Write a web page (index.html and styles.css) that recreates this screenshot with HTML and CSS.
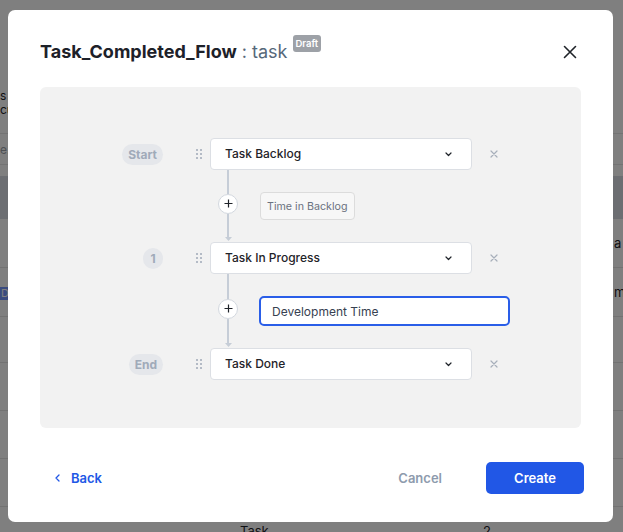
FILE: index.html
```html
<!DOCTYPE html>
<html>
<head>
<meta charset="utf-8">
<link rel="stylesheet" href="styles.css">
</head>
<body>
<div class="page">
  <div class="intro">
    <div class="frag">s</div>
    <div class="frag">cu</div>
  </div>
  <div class="search"><div class="frag muted">e.</div></div>
  <div class="table">
    <div class="thead"></div>
    <div class="trow tall"><span></span><span></span><span></span><span></span><span class="cell">a</span></div>
    <div class="trow tall"><span class="frag"><span class="badge">De</span></span><span></span><span></span><span></span><span class="cell">me</span></div>
    <div class="trow mid"></div>
    <div class="trow"></div>
    <div class="trow"></div>
    <div class="trow"></div>
    <div class="trow"><span></span><span></span><span class="cell">Task</span><span class="cell">2</span><span></span></div>
  </div>
</div>

<div class="overlay">
  <div class="modal">
    <div class="modal-head">
      <div class="title">
        <span class="name">Task_Completed_Flow</span>
        <span class="type">: task</span>
        <span class="draft">Draft</span>
      </div>
      <svg class="close" width="14" height="14" viewBox="0 0 14 14"><path d="M1.5 1.5 L12.5 12.5 M12.5 1.5 L1.5 12.5" stroke="#1f2329" stroke-width="1.6" stroke-linecap="round" fill="none"/></svg>
    </div>

    <div class="panel">
      <div class="step">
        <div class="label-col"><span class="pill">Start</span></div>
        <svg class="handle" width="6" height="10" viewBox="0 0 6 10"><g fill="#9fa9b7"><circle cx="1" cy="1" r="1"/><circle cx="5" cy="1" r="1"/><circle cx="1" cy="5" r="1"/><circle cx="5" cy="5" r="1"/><circle cx="1" cy="9" r="1"/><circle cx="5" cy="9" r="1"/></g></svg>
        <div class="select"><span>Task Backlog</span><svg class="chev" width="7" height="5" viewBox="0 0 7 5"><path d="M1 1 L3.5 3.5 L6 1" stroke="#1f2329" stroke-width="1.2" fill="none" stroke-linecap="round" stroke-linejoin="round"/></svg></div>
        <svg class="remove" width="8" height="8" viewBox="0 0 8 8"><path d="M1 1 L7 7 M7 1 L1 7" stroke="#a7afba" stroke-width="1.2" stroke-linecap="round"/></svg>
      </div>

      <div class="conn">
        <div class="rail">
          <div class="seg"></div>
          <div class="plus"><svg width="9" height="9" viewBox="0 0 9 9"><path d="M4.5 0.5 V8.5 M0.5 4.5 H8.5" stroke="#1f2329" stroke-width="1.2"/></svg></div>
          <div class="seg"></div>
          <svg class="arrow" width="7" height="4" viewBox="0 0 7 4"><path d="M0 0 H7 L3.5 4 Z" fill="#c6cdd7"/></svg>
        </div>
        <div class="conn-body"><span class="tag">Time in Backlog</span></div>
      </div>

      <div class="step">
        <div class="label-col"><span class="pill">1</span></div>
        <svg class="handle" width="6" height="10" viewBox="0 0 6 10"><g fill="#9fa9b7"><circle cx="1" cy="1" r="1"/><circle cx="5" cy="1" r="1"/><circle cx="1" cy="5" r="1"/><circle cx="5" cy="5" r="1"/><circle cx="1" cy="9" r="1"/><circle cx="5" cy="9" r="1"/></g></svg>
        <div class="select"><span>Task In Progress</span><svg class="chev" width="7" height="5" viewBox="0 0 7 5"><path d="M1 1 L3.5 3.5 L6 1" stroke="#1f2329" stroke-width="1.2" fill="none" stroke-linecap="round" stroke-linejoin="round"/></svg></div>
        <svg class="remove" width="8" height="8" viewBox="0 0 8 8"><path d="M1 1 L7 7 M7 1 L1 7" stroke="#a7afba" stroke-width="1.2" stroke-linecap="round"/></svg>
      </div>

      <div class="conn">
        <div class="rail">
          <div class="seg"></div>
          <div class="plus"><svg width="9" height="9" viewBox="0 0 9 9"><path d="M4.5 0.5 V8.5 M0.5 4.5 H8.5" stroke="#1f2329" stroke-width="1.2"/></svg></div>
          <div class="seg"></div>
          <svg class="arrow" width="7" height="4" viewBox="0 0 7 4"><path d="M0 0 H7 L3.5 4 Z" fill="#c6cdd7"/></svg>
        </div>
        <div class="conn-body"><input class="name-input" type="text" value="Development Time"></div>
      </div>

      <div class="step">
        <div class="label-col"><span class="pill">End</span></div>
        <svg class="handle" width="6" height="10" viewBox="0 0 6 10"><g fill="#9fa9b7"><circle cx="1" cy="1" r="1"/><circle cx="5" cy="1" r="1"/><circle cx="1" cy="5" r="1"/><circle cx="5" cy="5" r="1"/><circle cx="1" cy="9" r="1"/><circle cx="5" cy="9" r="1"/></g></svg>
        <div class="select"><span>Task Done</span><svg class="chev" width="7" height="5" viewBox="0 0 7 5"><path d="M1 1 L3.5 3.5 L6 1" stroke="#1f2329" stroke-width="1.2" fill="none" stroke-linecap="round" stroke-linejoin="round"/></svg></div>
        <svg class="remove" width="8" height="8" viewBox="0 0 8 8"><path d="M1 1 L7 7 M7 1 L1 7" stroke="#a7afba" stroke-width="1.2" stroke-linecap="round"/></svg>
      </div>
    </div>

    <div class="foot">
      <div class="back"><svg width="5" height="8" viewBox="0 0 5 8"><path d="M4 1 L1 4 L4 7" stroke="#2157e6" stroke-width="1.3" fill="none" stroke-linecap="round" stroke-linejoin="round"/></svg><span>Back</span></div>
      <div class="cancel">Cancel</div>
      <div class="create">Create</div>
    </div>
  </div>
</div>
</body>
</html>
```
FILE: styles.css
```css
html, body {
  margin: 0;
  padding: 0;
}
body {
  width: 623px;
  height: 532px;
  overflow: hidden;
  background: #ffffff;
  font-family: Inter, "Noto Sans", sans-serif;
  color: #1f2329;
}

/* background page */
.page {
  padding-top: 89px;
  font-size: 12px;
}
.intro {
  line-height: 14px;
}
.frag {
  white-space: nowrap;
}
.muted {
  color: #9aa0a8;
}
.search {
  margin-top: 16px;
  height: 30px;
  border-top: 1px solid #e6e6e6;
  border-bottom: 1px solid #e6e6e6;
  display: flex;
  align-items: center;
}
.table {
  margin-top: 11px;
}
.thead {
  height: 43px;
  background: #d8dce4;
}
.trow {
  height: 47px;
  border-bottom: 1px solid #e4e4e4;
  display: grid;
  grid-template-columns: 8px 232px 243px 130px 1fr;
  align-items: center;
  font-size: 13px;
}
.trow.tall {
  height: 48px;
}
.trow.mid {
  height: 45px;
}
.cell {
  white-space: nowrap;
}
.trow .cell:last-child {
  padding-left: 1px;
}
.badge {
  display: inline-block;
  background: #7496ff;
  color: #ffffff;
  font-size: 11px;
  line-height: 13px;
  padding: 0 1px;
}

/* overlay + modal */
.overlay {
  position: fixed;
  inset: 0;
  background: rgba(0, 0, 0, 0.5);
  display: flex;
  padding: 10px 10px 10px 8px;
  box-sizing: border-box;
}
.modal {
  flex: 1;
  background: #ffffff;
  border-radius: 7px;
  display: flex;
  flex-direction: column;
  padding: 0 32px;
}
.modal-head {
  display: flex;
  align-items: center;
  padding-top: 30px;
  height: 24px;
  margin-bottom: 23px;
}
.title {
  display: flex;
  align-items: flex-start;
  font-size: 18px;
  line-height: 24px;
}
.name {
  font-weight: 700;
  color: #1d2129;
}
.type {
  font-weight: 400;
  color: #56687a;
  margin-left: 5px;
}
.draft {
  margin-left: 5px;
  margin-top: -5px;
  height: 17px;
  line-height: 17px;
  padding: 0 3px;
  border-radius: 3px;
  background: #9da1a7;
  color: #ffffff;
  font-size: 9.5px;
  font-weight: 600;
}
.close {
  margin-left: auto;
  margin-right: 4px;
}

.panel {
  flex: 1;
  background: #f2f2f2;
  border-radius: 6px;
  padding-top: 51px;
}
.step {
  display: flex;
  align-items: center;
  height: 32px;
}
.label-col {
  width: 123px;
  display: flex;
  justify-content: flex-end;
}
.pill {
  height: 21px;
  min-width: 20px;
  box-sizing: border-box;
  padding: 0 6px;
  border-radius: 11px;
  background: #e5e7eb;
  color: #a0aab9;
  font-size: 12px;
  font-weight: 700;
  display: flex;
  align-items: center;
  justify-content: center;
}
.handle {
  margin-left: 33px;
  display: block;
}
.select {
  margin-left: 8px;
  width: 262px;
  height: 32px;
  box-sizing: border-box;
  border: 1px solid #dcdfe4;
  border-radius: 4px;
  background: #ffffff;
  display: flex;
  align-items: center;
  padding: 0 19px 2px 14px;
  font-size: 12px;
  font-weight: 500;
  color: #1f2329;
}
.chev {
  margin-left: auto;
  margin-top: 3px;
}
.remove {
  margin-left: 18px;
}

.conn {
  display: flex;
}
.rail {
  margin-left: 178px;
  width: 20px;
  display: flex;
  flex-direction: column;
  align-items: center;
}
.seg {
  width: 2px;
  flex: 1;
  background: #c6cdd7;
}
.arrow {
  display: block;
  margin-bottom: 1px;
}
.plus {
  width: 20px;
  height: 20px;
  box-sizing: border-box;
  border: 1px solid #d3d8df;
  border-radius: 50%;
  background: #ffffff;
  display: flex;
  align-items: center;
  justify-content: center;
}
.plus svg {
  display: block;
}
.conn-body {
  margin-left: 22px;
  padding: 22px 0;
  display: flex;
  align-items: center;
}
.tag {
  height: 28px;
  box-sizing: border-box;
  border: 1px solid #dcdcdc;
  border-radius: 4px;
  background: #f7f7f7;
  padding: 0 6px;
  font-size: 10.7px;
  color: #6b7280;
  display: flex;
  align-items: center;
}
.name-input {
  margin: 0 0 0 -1px;
  width: 251px;
  height: 30px;
  box-sizing: border-box;
  border: 2px solid #2a5ee8;
  border-radius: 5px;
  padding: 0 11px;
  font-family: Inter, "Noto Sans", sans-serif;
  font-size: 12px;
  color: #374151;
  background: #ffffff;
  outline: none;
}

.foot {
  display: flex;
  align-items: center;
  height: 32px;
  margin-top: 34px;
  margin-bottom: 28px;
  margin-right: -3px;
}
.back {
  display: flex;
  align-items: center;
  gap: 11px;
  margin-left: 15px;
  color: #2157e6;
  font-size: 13px;
  font-weight: 600;
}
.back svg {
  display: block;
}
.cancel {
  margin-left: auto;
  margin-right: 44px;
  color: #8e9bad;
  font-size: 13px;
  font-weight: 600;
}
.create {
  width: 98px;
  height: 32px;
  border-radius: 5px;
  background: #2157e6;
  color: #ffffff;
  font-size: 13px;
  font-weight: 600;
  display: flex;
  align-items: center;
  justify-content: center;
}
```
